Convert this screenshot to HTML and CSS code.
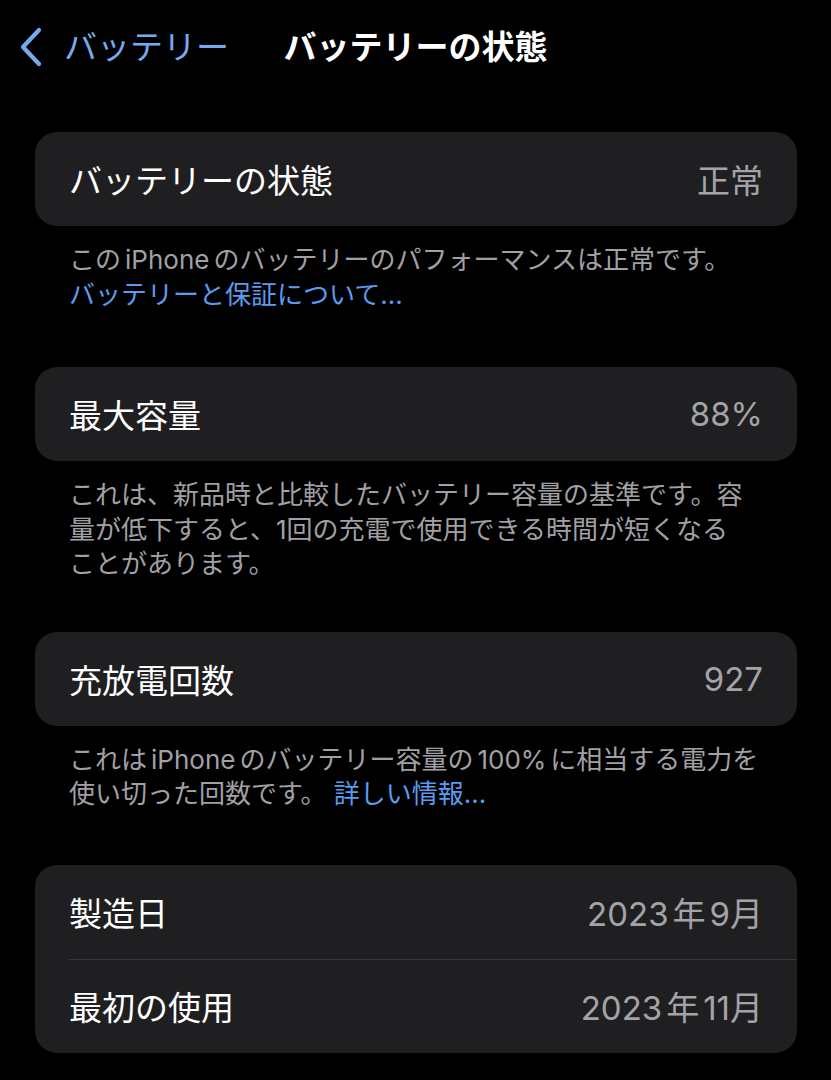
FILE: index.html
```html
<!DOCTYPE html>
<html lang="ja">
<head>
  <meta charset="UTF-8" />
  <meta name="viewport" content="width=device-width, initial-scale=1.0" />
  <title>バッテリーの状態</title>
  <link rel="stylesheet" href="styles.css">
</head>
<body>
  <header class="navbar">
    <a class="back" href="#">
      <svg class="chevron" width="26" height="42" viewBox="0 0 26 42">
        <path d="M21 4 L5 21 L21 38" fill="none" stroke="currentColor" stroke-width="4.2" stroke-linecap="round" stroke-linejoin="round"/>
      </svg>
      <span>バッテリー</span>
    </a>
    <h1 class="nav-title">バッテリーの状態</h1>
  </header>

  <main class="content">
    <section class="group">
      <div class="card">
        <div class="row">
          <span class="label">バッテリーの状態</span>
          <span class="value">正常</span>
        </div>
      </div>
      <p class="footer">この<span class="en">iPhone</span>のバッテリーのパフォーマンスは正常です。<br><a class="link" href="#">バッテリーと保証について...</a></p>
    </section>

    <section class="group">
      <div class="card">
        <div class="row">
          <span class="label">最大容量</span>
          <span class="value">88%</span>
        </div>
      </div>
      <p class="footer">これは、新品時と比較したバッテリー容量の基準です。容量が低下すると、1回の充電で使用できる時間が短くなる<span class="nowrap">ことがあります。</span></p>
    </section>

    <section class="group">
      <div class="card">
        <div class="row">
          <span class="label">充放電回数</span>
          <span class="value">927</span>
        </div>
      </div>
      <p class="footer">これは<span class="en">iPhone</span>のバッテリー容量の<span class="en">100%</span>に相当する電力を使い切った回数です。 <a class="link" href="#">詳しい情報...</a></p>
    </section>

    <section class="group">
      <div class="card">
        <div class="row">
          <span class="label">製造日</span>
          <span class="value">2023<span class="gap">年</span>9月</span>
        </div>
        <div class="row">
          <span class="label">最初の使用</span>
          <span class="value">2023<span class="gap">年</span>11月</span>
        </div>
      </div>
    </section>
  </main>
</body>
</html>
```

FILE: styles.css
```css
body {
  font-family: "Inter", "Noto Sans CJK JP", sans-serif;
  background: #000;
  color: #fff;
  margin: 0;
  width: 831px;
  height: 1080px;
  overflow: hidden;
}
.navbar {
  position: relative;
  height: 94px;
  display: flex;
  align-items: center;
  justify-content: center;
}
.back {
  position: absolute;
  left: 18px;
  top: 26px;
  display: flex;
  align-items: center;
  gap: 20px;
  color: #76aaef;
  text-decoration: none;
  font-size: 33px;
  line-height: 42px;
}
.chevron {
  display: block;
}
.nav-title {
  margin: 0;
  font-size: 33px;
  font-weight: 700;
  line-height: 42px;
}
.content {
  padding: 38px 34px 0 35px;
}
.group {
  margin-bottom: 53px;
}
.group:first-child {
  margin-bottom: 55px;
}
.group:nth-child(2) {
  margin-bottom: 50px;
}
.card {
  background: #1f1f21;
  border-radius: 22px;
  overflow: hidden;
}
.row {
  height: 94px;
  display: flex;
  align-items: center;
  justify-content: space-between;
  padding: 0 34px 0 34px;
  font-size: 33px;
}
.row + .row {
  height: 93px;
  border-top: 1px solid #38383b;
  margin-left: 34px;
  padding-left: 0;
}
.label {
  color: #fff;
}
.value {
  color: #a3a3a8;
}
.gap {
  padding: 0 4px;
}
.footer {
  margin: 0;
  padding: 17px 34px 0 34px;
  font-size: 26px;
  line-height: 34.5px;
  color: #a0a0a5;
}
.en {
  padding: 0 4px;
}
.nowrap {
  white-space: nowrap;
}
.link {
  color: #5a9cf0;
  text-decoration: none;
}
```
